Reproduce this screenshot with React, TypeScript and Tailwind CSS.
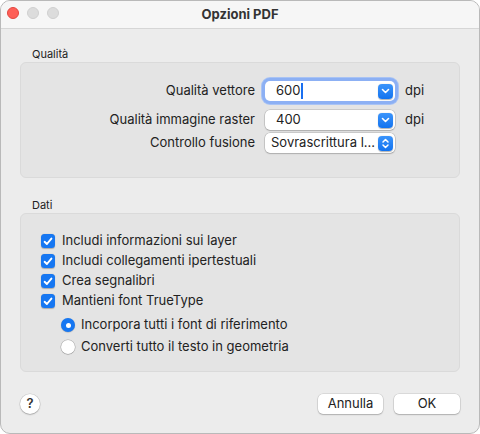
import React from 'react';

const font = { fontFamily: 'Inter, "Liberation Sans", sans-serif' };

function Chevron({ updown = false }: { updown?: boolean }) {
    return (
        <div className="w-[15px] h-[15px] rounded-[4px] bg-gradient-to-b from-[#3a94fb] to-[#1173ef] flex items-center justify-center shadow-[0_0.5px_1px_rgba(0,0,0,0.3)]">
            {updown ? (
                <svg width="9" height="11" viewBox="0 0 9 11" fill="none" stroke="white" strokeWidth="1.5" strokeLinecap="round" strokeLinejoin="round">
                    <path d="M2 4 L4.5 1.5 L7 4" />
                    <path d="M2 7 L4.5 9.5 L7 7" />
                </svg>
            ) : (
                <svg width="9" height="6" viewBox="0 0 9 6" fill="none" stroke="white" strokeWidth="1.6" strokeLinecap="round" strokeLinejoin="round">
                    <path d="M1.5 1.5 L4.5 4.5 L7.5 1.5" />
                </svg>
            )}
        </div>
    );
}

function Combo({ value, focused = false, updown = false }: { value: string; focused?: boolean; updown?: boolean }) {
    return (
        <div className={`w-[130px] h-[20px] rounded-[5px] bg-white flex items-center justify-between pr-[2px] ${focused ? 'shadow-[0_0_0_3px_#8cb0f4,0_0_0_4px_#a9c3f4]' : 'shadow-[0_0_0_0.5px_rgba(0,0,0,0.22),0_1px_1.5px_rgba(0,0,0,0.15)]'}`}>
            <span className={`text-[13px] text-[#222] ${updown ? 'pl-[6px]' : 'pl-[11px]'} flex items-center`}>
                {value}
                {focused && <span className="inline-block w-[1.5px] h-[16px] bg-[#1a6ff0] ml-[1px]" />}
            </span>
            <Chevron updown={updown} />
        </div>
    );
}

function Check({ label }: { label: string }) {
    return (
        <div className="flex items-center h-[20px]">
            <div className="w-[14px] h-[14px] rounded-[3.5px] bg-[#1677f2] flex items-center justify-center shadow-[0_0.5px_1px_rgba(0,0,0,0.25)]">
                <svg width="10" height="9" viewBox="0 0 10 9" fill="none" stroke="white" strokeWidth="1.9" strokeLinecap="round" strokeLinejoin="round">
                    <path d="M1.6 4.8 L3.9 7 L8.4 1.6" />
                </svg>
            </div>
            <span className="ml-[7px] text-[13px] text-[#222]">{label}</span>
        </div>
    );
}

function Radio({ label, on }: { label: string; on: boolean }) {
    return (
        <div className="flex items-center h-[22px]">
            {on ? (
                <div className="w-[14px] h-[14px] rounded-full bg-[#1677f2] flex items-center justify-center shadow-[0_0.5px_1px_rgba(0,0,0,0.25)]">
                    <div className="w-[5px] h-[5px] rounded-full bg-white" />
                </div>
            ) : (
                <div className="w-[14px] h-[14px] rounded-full bg-white shadow-[0_0_0_0.5px_rgba(0,0,0,0.25),0_0.5px_1px_rgba(0,0,0,0.2)]" />
            )}
            <span className="ml-[6px] text-[13px] text-[#222]">{label}</span>
        </div>
    );
}

export default function App() {
    return (
        <div style={font} className="w-[480px] h-[434px] rounded-[10px] border border-[#b9b9b9] bg-[#ececec] overflow-hidden flex flex-col">
            <div className="h-[28px] shrink-0 bg-[#f6f6f6] border-b border-[#d6d6d6] relative flex items-center justify-center">
                <div className="absolute left-[6px] top-[6px] flex gap-[8px]">
                    <div className="w-[12px] h-[12px] rounded-full bg-[#fe5f57] border border-[#e2463f]" />
                    <div className="w-[12px] h-[12px] rounded-full bg-[#dcdcdc] border border-[#cfcfcf]" />
                    <div className="w-[12px] h-[12px] rounded-full bg-[#dcdcdc] border border-[#cfcfcf]" />
                </div>
                <span className="text-[13px] font-bold text-[#333]">Opzioni PDF</span>
            </div>

            <div className="px-[19px] pt-[18px]">
                <div className="text-[11px] text-[#222] pl-[12px] h-[15px] leading-[15px]">Qualità</div>
                <div className="h-[116px] rounded-[6px] bg-[#e4e4e4] border border-[#dadada] pt-[18px]">
                    <div className="flex items-center">
                        <span className="w-[234px] text-right text-[13px] text-[#222]">Qualità vettore</span>
                        <div className="ml-[10px]"><Combo value="600" focused /></div>
                        <span className="ml-[10px] text-[13px] text-[#222]">dpi</span>
                    </div>
                    <div className="flex items-center mt-[9px]">
                        <span className="w-[234px] text-right text-[13px] text-[#222]">Qualità immagine raster</span>
                        <div className="ml-[10px]"><Combo value="400" /></div>
                        <span className="ml-[10px] text-[13px] text-[#222]">dpi</span>
                    </div>
                    <div className="flex items-center mt-[3px]">
                        <span className="w-[234px] text-right text-[13px] text-[#222]">Controllo fusione</span>
                        <div className="ml-[10px]"><Combo value="Sovrascrittura l..." updown /></div>
                    </div>
                </div>

                <div className="mt-[20px] text-[11px] text-[#222] pl-[12px] h-[15px] leading-[15px]">Dati</div>
                <div className="h-[159px] rounded-[6px] bg-[#e4e4e4] border border-[#dadada] pt-[17px] pl-[20px]">
                    <Check label="Includi informazioni sui layer" />
                    <Check label="Includi collegamenti ipertestuali" />
                    <Check label="Crea segnalibri" />
                    <Check label="Mantieni font TrueType" />
                    <div className="pl-[20px] mt-[3px]">
                        <Radio label="Incorpora tutti i font di riferimento" on />
                        <Radio label="Converti tutto il testo in geometria" on={false} />
                    </div>
                </div>

                <div className="mt-[22px] flex items-center">
                    <div className="w-[20px] h-[20px] rounded-full bg-white shadow-[0_0_0_0.5px_rgba(0,0,0,0.15),0_1px_1.5px_rgba(0,0,0,0.2)] flex items-center justify-center text-[13px] font-semibold text-[#333]">?</div>
                    <div className="ml-auto flex gap-[11px]">
                        <button className="w-[65px] h-[20px] rounded-[5px] bg-white shadow-[0_0_0_0.5px_rgba(0,0,0,0.15),0_1px_1.5px_rgba(0,0,0,0.2)] text-[13px] text-[#222]">Annulla</button>
                        <button className="w-[66px] h-[20px] rounded-[5px] bg-white shadow-[0_0_0_0.5px_rgba(0,0,0,0.15),0_1px_1.5px_rgba(0,0,0,0.2)] text-[13px] text-[#222]">OK</button>
                    </div>
                </div>
            </div>
        </div>
    );
}
